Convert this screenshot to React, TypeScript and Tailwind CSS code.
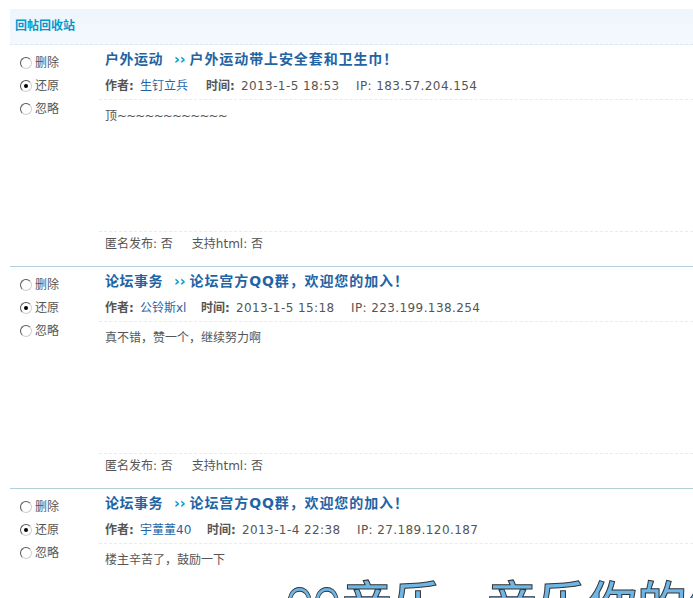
const sans = 'font-["DejaVu_Sans","Noto_Sans_CJK_SC",sans-serif]'

interface Post {
  forum: string
  title: string
  author: string
  time: string
  ip: string
  body: string
  tail?: string
  authorWidth: string
}

const posts: Post[] = [
  {
    forum: '户外运动',
    title: '户外运动带上安全套和卫生巾！',
    author: '生钉立兵',
    time: '2013-1-5 18:53',
    ip: '183.57.204.154',
    body: '顶',
    tail: '~~~~~~~~~~~~',
    authorWidth: 'w-[66px]',
  },
  {
    forum: '论坛事务',
    title: '论坛宫方QQ群，欢迎您的加入！',
    author: '公铃斯xl',
    time: '2013-1-5 15:18',
    ip: '223.199.138.254',
    body: '真不错，赞一个，继续努力啊',
    authorWidth: 'w-[61px]',
  },
  {
    forum: '论坛事务',
    title: '论坛宫方QQ群，欢迎您的加入！',
    author: '宇蕫蕫40',
    time: '2013-1-4 22:38',
    ip: '27.189.120.187',
    body: '楼主辛苦了，鼓励一下',
    authorWidth: 'w-[67px]',
  },
]

function Radio({ label, checked }: { label: string; checked?: boolean }) {
  return (
    <div className="flex h-[23px] items-center">
      <span className="flex h-[12px] w-[12px] items-center justify-center rounded-full border border-t-[#555555] border-l-[#555555] border-r-[#d4d0c8] border-b-[#d4d0c8] bg-white">
        {checked && <span className="h-[4px] w-[4px] rounded-full bg-black" />}
      </span>
      <span className="ml-[3px] text-[12px] text-[#555555]">{label}</span>
    </div>
  )
}

function Body({ post }: { post: Post }) {
  return (
    <p className="pl-[6px] text-[12px] leading-[32px] text-[#555555]">
      {post.body}
      {post.tail && <span className="tracking-[-0.9px]">{post.tail}</span>}
    </p>
  )
}

function PostRow({ post, last }: { post: Post; last?: boolean }) {
  return (
    <div className={`flex ${last ? '' : 'h-[222px] border-b border-[#b4d0dc]'}`}>
      {/* radios */}
      <div className="w-[89px] shrink-0 pl-[10px] pt-[6px]">
        <Radio label="删除" />
        <Radio label="还原" checked />
        <Radio label="忽略" />
      </div>

      <div className="min-w-0 flex-1">
        <div className="h-[28px] whitespace-nowrap pl-[6px] text-[14px] font-bold leading-[28px] text-[#1f64a4]">
          <span className="tracking-[0.5px]">{post.forum}</span>
          <span className="ml-[11px] mr-[4px] text-[#0099cc]">››</span>
          <span className="tracking-[0.9px]">{post.title}</span>
        </div>

        <div className="flex h-[27px] items-center whitespace-nowrap border-b border-dashed border-[#e2ecf5] pl-[6px] text-[12px] text-[#555555]">
          <b className="w-[35px]">作者:</b>
          <span className={`${post.authorWidth} text-[#1f64a4]`}>{post.author}</span>
          <b className="w-[35px]">时间:</b>
          <span className="w-[115px] tracking-[0.4px]">{post.time}</span>
          <span className="tracking-[0.4px]">IP: {post.ip}</span>
        </div>

        {last ? (
          <div className="overflow-hidden">
            <Body post={post} />
            <div className="ml-[187px] flex whitespace-nowrap font-medium text-[50px] leading-[60px] text-[#6db6e6] blur-[0.4px] [-webkit-text-stroke:1px_#333333]">
              <span className='inline-block w-[56px] origin-left scale-x-[0.7] font-["Liberation_Sans"]'>QQ</span>
              <span>音乐</span>
              <span className="w-[45px]">，</span>
              <span>音乐你的生活</span>
            </div>
          </div>
        ) : (
          <>
            <div className="h-[132px] border-b border-dashed border-[#e2ecf5]">
              <Body post={post} />
            </div>
            <p className="pl-[6px] text-[12px] leading-[25px] text-[#555555]">
              匿名发布: 否
              <span className="ml-[19px]">支持html: 否</span>
            </p>
          </>
        )}
      </div>
    </div>
  )
}

export default function App() {
  return (
    <div className={`h-[598px] w-[693px] overflow-hidden bg-white pl-[10px] pt-[9px] ${sans}`}>
      <div className="h-[36px] border-b border-dashed border-[#d8e8f5] bg-gradient-to-b from-[#eef5fd] to-[#f5f9fe] pl-[5px] text-[12px] font-bold leading-[35px] text-[#0099cc]">
        回帖回收站
      </div>
      {posts.map((post, i) => (
        <PostRow key={i} post={post} last={i === posts.length - 1} />
      ))}
    </div>
  )
}
